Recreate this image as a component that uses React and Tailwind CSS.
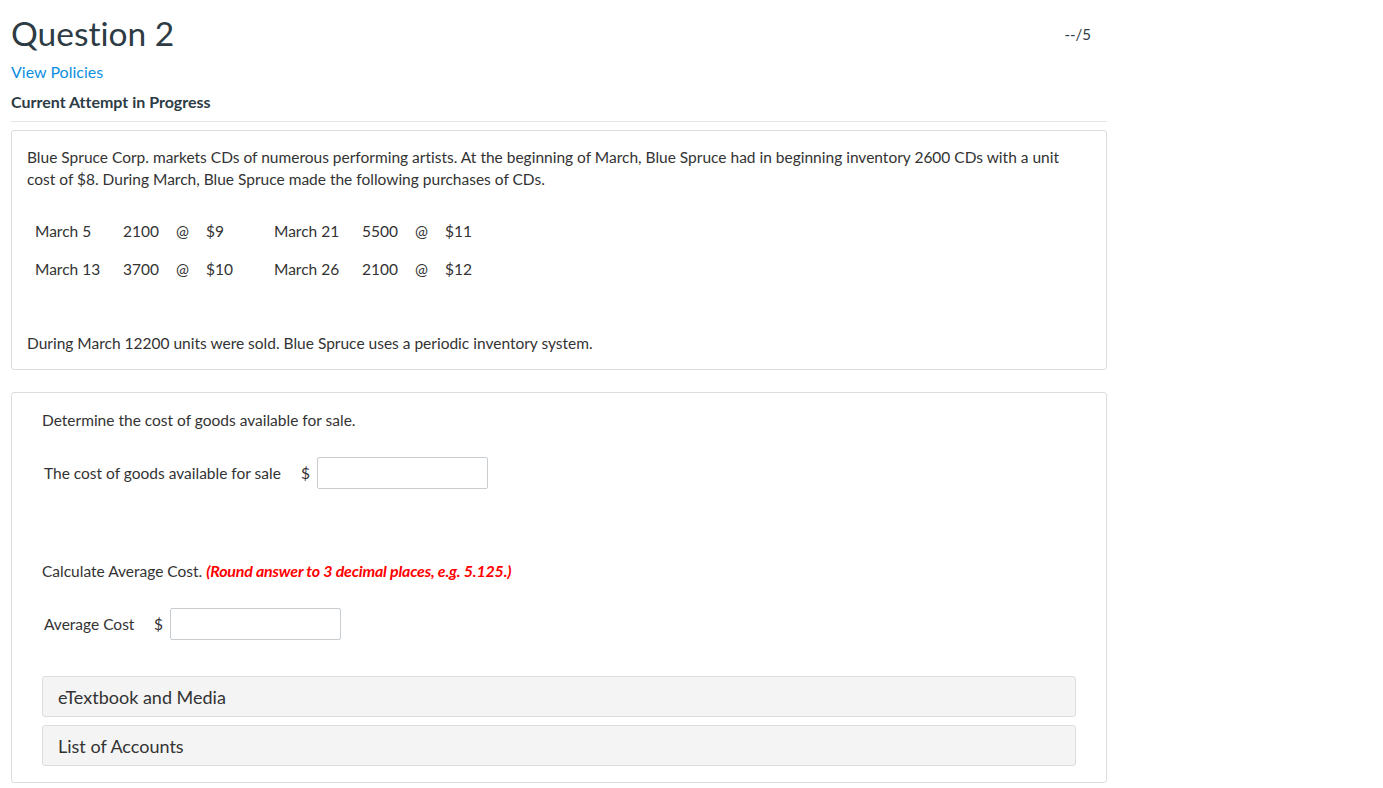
const purchases = [
  ["March 5", "2100", "$9", "March 21", "5500", "$11"],
  ["March 13", "3700", "$10", "March 26", "2100", "$12"],
];

function AnswerRow({ label, labelWidth }) {
  return (
    <div className="flex items-center h-8 pl-[2px]">
      <span className={labelWidth}>{label}</span>
      <span className="w-[16px]">$</span>
      <input
        type="text"
        className="w-[171px] h-8 border border-[#c7cdd1] bg-white rounded-[2px] px-2 outline-none"
      />
    </div>
  );
}

function App() {
  return (
    <div className="min-h-screen bg-white font-['Lato','Liberation_Sans',sans-serif] [font-variant-ligatures:none] text-[15.5px] text-[#333333]">
      <div className="ml-[11px] w-[1096px]">
        <div className="flex items-start justify-between pr-[16px]">
          <h1 className="text-[33.5px] leading-[40px] mt-[13px] text-[#2d3b45] font-normal">
            Question 2
          </h1>
          <span className="mt-[23px] text-[15px] text-[#2d3b45]">--/5</span>
        </div>
        <a href="#" className="block mt-[9px] leading-[20px] text-[16px] text-[#0d8fe0]">
          View Policies
        </a>
        <p className="mt-[10px] leading-[20px] text-[16px] font-bold text-[#2d3b45]">
          Current Attempt in Progress
        </p>
        <div className="mt-[9px] border-t border-[#e5e5e5]" />

        <div className="mt-[8px] border border-[#dddddd] rounded-[3px] px-[15px] pt-[15px] pb-[15px] leading-[22px]">
          <p>
            Blue Spruce Corp. markets CDs of numerous performing artists. At the beginning of March, Blue Spruce had in beginning inventory 2600 CDs with a unit cost of $8. During March, Blue Spruce made the following purchases of CDs.
          </p>
          <div className="mt-[22px] ml-[8px] grid grid-cols-[88px_53px_30px_68px_88px_53px_30px_68px] w-fit">
            {purchases.map((row, i) => (
              <div key={i} className="contents">
                <span className="h-[38px] flex items-center">{row[0]}</span>
                <span className="h-[38px] flex items-center">{row[1]}</span>
                <span className="h-[38px] flex items-center">@</span>
                <span className="h-[38px] flex items-center">{row[2]}</span>
                <span className="h-[38px] flex items-center">{row[3]}</span>
                <span className="h-[38px] flex items-center">{row[4]}</span>
                <span className="h-[38px] flex items-center">@</span>
                <span className="h-[38px] flex items-center">{row[5]}</span>
              </div>
            ))}
          </div>
          <p className="mt-[44px]">
            During March 12200 units were sold. Blue Spruce uses a periodic inventory system.
          </p>
        </div>

        <div className="mt-[22px] border border-[#dddddd] rounded-[3px] pl-[30px] pr-[30px] pt-[16px] pb-[16px] leading-[22px]">
          <p>Determine the cost of goods available for sale.</p>
          <div className="mt-[26px]">
            <AnswerRow label="The cost of goods available for sale" labelWidth="w-[257px]" />
          </div>
          <p className="mt-[71px]">
            Calculate Average Cost.{" "}
            <span className="text-[#ff0000] text-[16px] font-bold italic tracking-[-0.2px]">
              (Round answer to 3 decimal places, e.g. 5.125.)
            </span>
          </p>
          <div className="mt-[26px]">
            <AnswerRow label="Average Cost" labelWidth="w-[110px]" />
          </div>
          <div className="mt-[36px] flex flex-col gap-[8px]">
            {["eTextbook and Media", "List of Accounts"].map((t) => (
              <div
                key={t}
                className="h-[41px] flex items-center px-[15px] bg-[#f4f4f4] border border-[#dddddd] rounded-[3px] text-[18px] text-[#333333]"
              >
                {t}
              </div>
            ))}
          </div>
        </div>
      </div>
    </div>
  );
}

export default App;
